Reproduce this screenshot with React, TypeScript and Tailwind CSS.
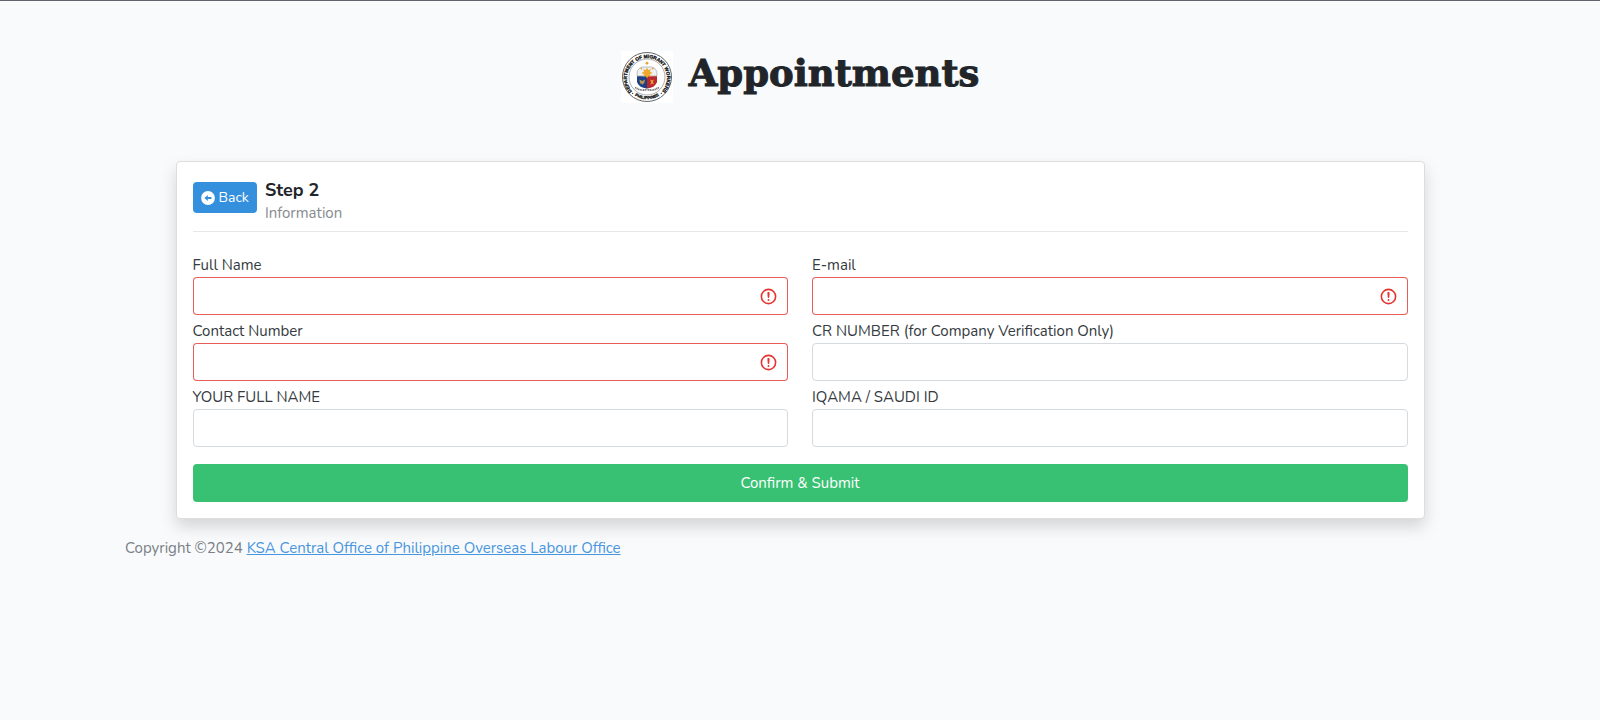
import { useId } from "react";

interface Field {
  name: string;
  label: string;
  type: string;
  required?: boolean;
}

const FIELDS: Field[] = [
  { name: "name",    label: "Full Name",                                  type: "text",  required: true },
  { name: "email",   label: "E-mail",                                     type: "email", required: true },
  { name: "contact", label: "Contact Number",                             type: "tel",   required: true },
  { name: "cr",      label: "CR NUMBER (for Company Verification Only)",  type: "text" },
  { name: "owner",   label: "YOUR FULL NAME",                             type: "text" },
  { name: "iqama",   label: "IQAMA / SAUDI ID",                           type: "text" },
];

function Logo() {
  return (
    <svg viewBox="0 0 52 52" className="size-[52px] shrink-0" role="img" aria-label="Department of Migrant Workers">
      <defs>
        <path id="seal-top" d="M10.9 40.2 A20 20 0 1 1 41.1 40.2" />
        <path id="seal-bottom" d="M11 42.4 A22.3 22.3 0 0 0 41 42.4" />
      </defs>
      <rect width="52" height="52" fill="#fff" />
      <circle cx="26" cy="26" r="24.5" fill="#fff" stroke="#555" strokeWidth="0.9" />
      <circle cx="26" cy="26" r="18" fill="#fff" stroke="#777" strokeWidth="0.6" />
      <g fill="#111" stroke="#111" strokeWidth="0.3" fontFamily="Liberation Sans, sans-serif" fontWeight="700" textAnchor="middle">
        <text fontSize="4.8">
          <textPath href="#seal-top" startOffset="50%">DEPARTMENT OF MIGRANT WORKERS</textPath>
        </text>
        <text fontSize="4.1">
          <textPath href="#seal-bottom" startOffset="50%">PHILIPPINES</textPath>
        </text>
      </g>
      <circle cx="11.6" cy="42.4" r="0.7" fill="#444" />
      <circle cx="40.4" cy="42.4" r="0.7" fill="#444" />
      {/* Shield */}
      <path d="M16 25 Q15.5 19.5 18 17.5 L21 16 L31 16 L34 17.5 Q36.5 19.5 36 25 Z" fill="#eef0f2" stroke="#999" strokeWidth="0.6" />
      <path d="M16 25.2 H26 V37.4 Q17.6 36.6 16 31 Z" fill="#1c3f86" />
      <path d="M36 25.2 H26 V37.4 Q34.4 36.6 36 31 Z" fill="#b9262d" />
      {/* Sun */}
      <path d="M26 16.4 L27.2 19 L29.8 18.2 L29 20.8 L31.6 22 L29 23.2 L29.8 25.8 L27.2 25 L26 27.6 L24.8 25 L22.2 25.8 L23 23.2 L20.4 22 L23 20.8 L22.2 18.2 L24.8 19 Z" fill="#efa92c" />
      <circle cx="26" cy="12.2" r="1.4" fill="#e0a43c" />
      <circle cx="20.4" cy="17.6" r="0.9" fill="#e0a43c" />
      <circle cx="31.6" cy="17.6" r="0.9" fill="#e0a43c" />
      <path d="M18.4 28.6 L21.2 30 L24 28.6 L23.2 32.6 H22.2 L21.2 34 L20.2 32.6 H19.2 Z" fill="#b89552" />
      <path d="M29.2 28.6 L31 29.2 L32.8 28.4 L32 31 L33 33.6 L31 32.6 L29.4 34 L30 31 Z" fill="#e0a03c" />
      <path d="M14 36.4 Q20 40.4 26 38.4 Q32 40.4 38 36.4" fill="none" stroke="#777" strokeWidth="1.8" strokeDasharray="1.2 0.5" />
    </svg>
  );
}

function BackIcon() {
  return (
    <svg viewBox="0 0 14 14" className="size-3.5 shrink-0" aria-hidden="true">
      <circle cx="7" cy="7" r="6.9" fill="#fff" />
      <path d="M3.4 7 L6.8 4 V6.1 H10.4 V7.9 H6.8 V10 Z" fill="#3490dc" />
    </svg>
  );
}

function InvalidIcon() {
  return (
    <svg viewBox="0 0 12 12" className="size-[19px]" fill="none" stroke="#e3342f" aria-hidden="true">
      <circle cx="6" cy="6" r="4.5" />
      <path strokeLinejoin="round" d="M5.8 3.6h.4L6 6.5z" />
      <circle cx="6" cy="8.2" r=".6" fill="#e3342f" stroke="none" />
    </svg>
  );
}

function FormField({ field }: { field: Field }) {
  const id = useId();

  return (
    <div>
      <label htmlFor={id} className="block leading-6 text-[#343a40]">
        {field.label}
      </label>
      <div className="relative">
        <input
          id={id}
          name={field.name}
          type={field.type}
          aria-invalid={field.required}
          className={
            field.required
              ? "block h-[38px] w-full rounded border border-[#e3342f]/80 bg-white pl-3 pr-9 outline-none"
              : "block h-[38px] w-full rounded border border-[#d5dadf] bg-white px-3 outline-none"
          }
        />
        {field.required && (
          <span className="pointer-events-none absolute inset-y-0 right-2.5 flex items-center">
            <InvalidIcon />
          </span>
        )}
      </div>
    </div>
  );
}

export default function App() {
  return (
    <div className="min-h-screen border-t border-[#63616b] bg-[#f8fafc] font-['Nunito',sans-serif] text-[15px] text-[#212529]">
      <header className="flex items-center justify-center gap-4 pt-[50px] pb-[58px]">
        <Logo />
        <h1 className="pb-2 font-['Broadway','DejaVu_Serif',serif] text-[37px] leading-11 font-bold [-webkit-text-stroke:1px_#212529]">
          Appointments
        </h1>
      </header>

      <div className="mx-auto max-w-[1350px]">
        <main className="mx-auto max-w-[1249px] rounded border border-[#dcdddf] bg-white p-4 shadow-[0_8px_16px_rgba(0,0,0,0.15)]">
          <div className="flex items-start gap-2 border-b border-[#e6e7e8] pb-[7px]">
            <button
              type="button"
              className="mt-1 flex h-[31px] items-center gap-1 rounded bg-[#3490dc] px-2 text-sm text-white"
            >
              <BackIcon />
              Back
            </button>
            <div>
              <h2 className="text-[18px] leading-6 font-bold">Step 2</h2>
              <p className="leading-[22px] text-[#868b90]">Information</p>
            </div>
          </div>

          <form noValidate>
            <div className="grid grid-cols-2 gap-x-6 gap-y-1 pt-[21px]">
              {FIELDS.map((field) => (
                <FormField key={field.name} field={field} />
              ))}
            </div>
            <button type="submit" className="mt-[17px] h-[38px] w-full rounded bg-[#38c172] text-white">
              Confirm &amp; Submit
            </button>
          </form>
        </main>

        <footer className="pt-[17px] leading-6 text-[#7b8084]">
          Copyright ©2024{" "}
          <a href="#" className="text-[#4a96de] underline">
            KSA Central Office of Philippine Overseas Labour Office
          </a>
        </footer>
      </div>
    </div>
  );
}
